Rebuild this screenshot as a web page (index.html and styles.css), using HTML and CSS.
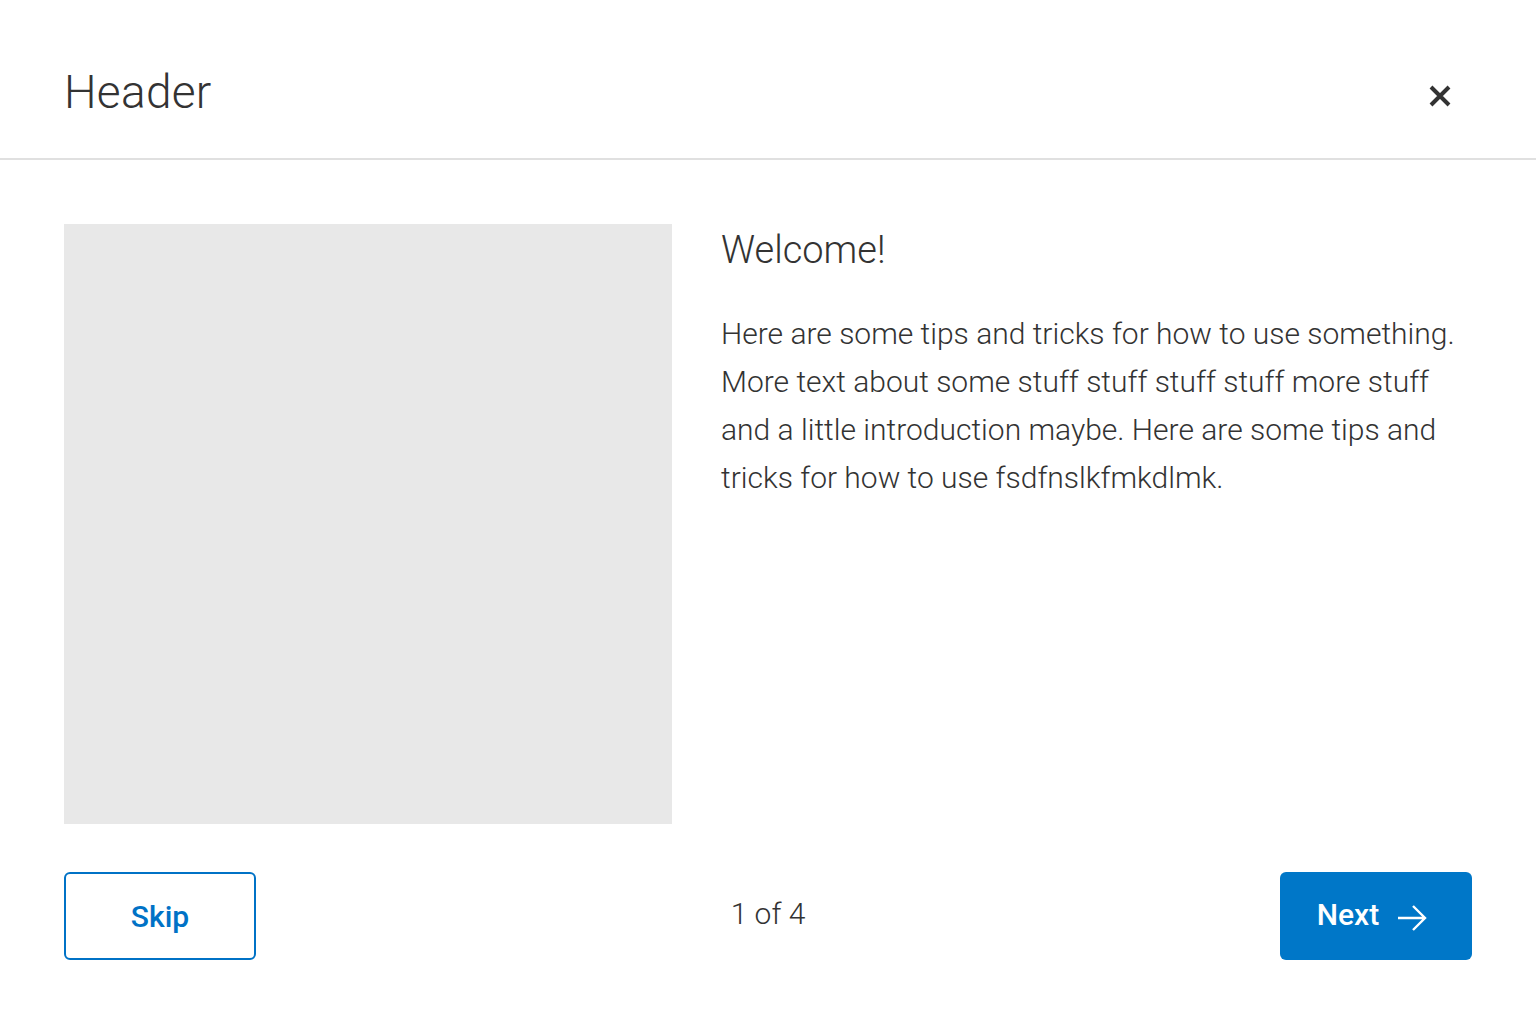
FILE: index.html
```html
<!DOCTYPE html>
<html lang="en">
<head>
<meta charset="utf-8">
<title>Modal</title>
<link rel="stylesheet" href="styles.css">
</head>
<body>
<div class="modal">
  <header class="modal-header">
    <h1 class="title">Header</h1>
    <button class="close" aria-label="Close">
      <svg width="22" height="22" viewBox="0 0 22 22"><path d="M2 2 L20 20 M20 2 L2 20" stroke="#333" stroke-width="4" stroke-linecap="butt"/></svg>
    </button>
  </header>
  <main class="modal-body">
    <div class="media"></div>
    <div class="copy">
      <h2 class="welcome">Welcome!</h2>
      <p class="text">Here are some tips and tricks for how to use something. More text about some stuff stuff stuff stuff more stuff and a little introduction maybe. Here are some tips and tricks for how to use fsdfnslkfmkdlmk.</p>
    </div>
  </main>
  <footer class="modal-footer">
    <button class="btn btn-outline">Skip</button>
    <span class="pager">1 of 4</span>
    <button class="btn btn-primary">Next
      <svg class="arrow" width="30" height="26" viewBox="0 0 30 26"><path d="M1 13 H28 M16 1 L28 13 L16 25" stroke="#fff" stroke-width="2.4" fill="none"/></svg>
    </button>
  </footer>
</div>
</body>
</html>
```
FILE: styles.css
```css
* { box-sizing: border-box; }
html, body { margin: 0; padding: 0; background: #fff; }
body { font-family: Roboto, "Noto Sans", sans-serif; color: #333; width: 1536px; height: 1024px; overflow: hidden; }
.modal { display: flex; flex-direction: column; height: 100%; }
.modal-header {
  height: 160px;
  border-bottom: 2px solid #e0e0e0;
  display: flex;
  align-items: flex-start;
  justify-content: space-between;
  padding: 62px 85px 0 64px;
}
.title { margin: 0; font-weight: 300; font-size: 46px; line-height: 60px; color: #333; letter-spacing: 0.3px; }
.close { background: none; border: 0; padding: 0; width: 22px; height: 22px; display: flex; margin-top: 23px; }
.modal-body {
  display: flex;
  gap: 49px;
  padding: 64px 64px 0 64px;
}
.media { width: 608px; height: 600px; background: #e8e8e8; flex: none; }
.copy { flex: 1; }
.welcome { margin: 0; font-weight: 300; font-size: 38px; line-height: 48px; color: #333; margin-top: 2px; }
.text { margin: 36px 0 0; font-weight: 300; font-size: 30px; line-height: 48px; color: #333; }
.modal-footer {
  display: flex;
  align-items: center;
  justify-content: space-between;
  padding: 48px 64px 0 64px;
}
.btn {
  width: 192px; height: 88px;
  border-radius: 6px;
  font-family: Roboto, sans-serif;
  font-size: 30px;
  font-weight: 500;
  display: flex; align-items: center; justify-content: center;
  cursor: pointer;
}
.btn-outline { background: #fff; border: 2px solid #0072c6; color: #0072c6; }
.btn-primary { background: #0077c8; border: 0; color: #fff; gap: 18px; padding-bottom: 4px; padding-right: 14px; }
.arrow { margin-top: 6px; }
.pager { font-size: 30px; font-weight: 300; color: #333; padding-bottom: 6px; }
```
